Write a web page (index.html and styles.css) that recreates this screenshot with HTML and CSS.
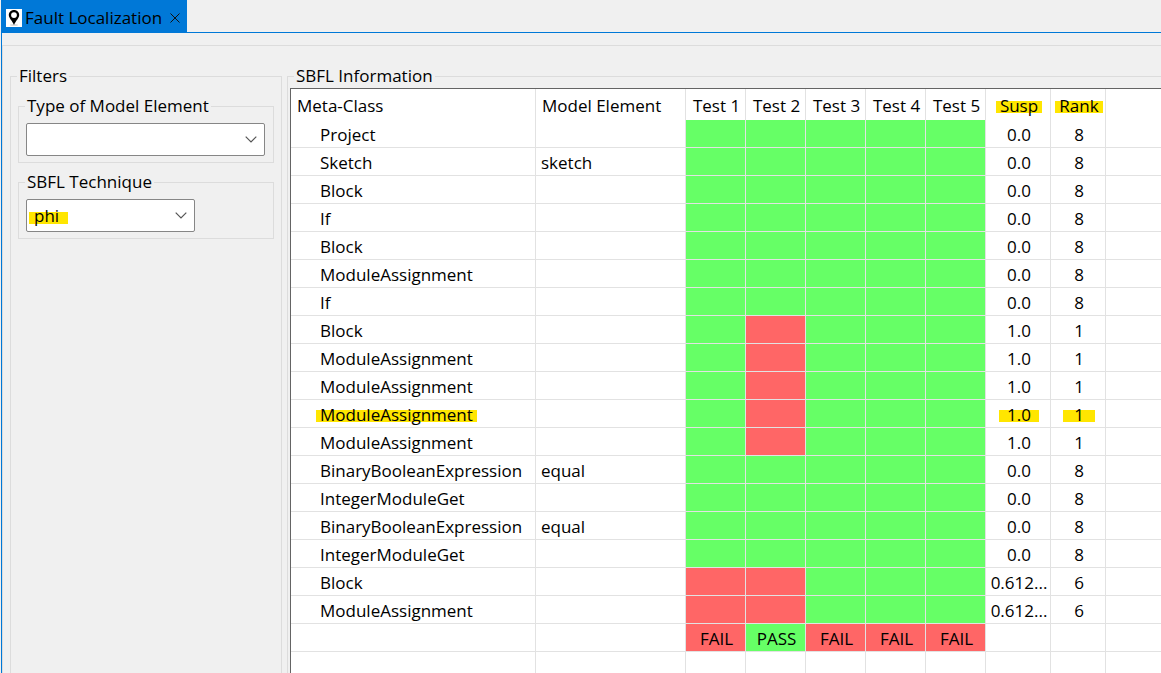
FILE: index.html
```html
<!DOCTYPE html>
<html lang="en">
<head>
<meta charset="utf-8">
<title>Fault Localization</title>
<link rel="stylesheet" href="styles.css">
</head>
<body>
<div class="view">
  <header class="tab-bar">
    <div class="tab">
      <svg class="tab-icon" viewBox="0 0 16 18" aria-hidden="true">
        <rect width="16" height="18" fill="#fff"/>
        <ellipse cx="8" cy="16" rx="4" ry="1" fill="#ddd"/>
        <path fill="#000" fill-rule="evenodd" d="M8 1C5 1 2.800 3.200 2.800 6c0 3 3.600 6 5.200 10 1.600-4 5.200-7 5.200-10C13.200 3.200 11 1 8 1Zm0 2.200a2.900 2.900 0 1 1 0 5.800 2.900 2.900 0 0 1 0-5.800Z"/>
      </svg>
      <span>Fault Localization</span>
      <button class="tab-close" type="button" aria-label="Close">
        <svg viewBox="0 0 10 10" aria-hidden="true"><path d="M.5.5l9 9M9.500.5l-9 9" stroke="#111" fill="none"/></svg>
      </button>
    </div>
  </header>
  <main class="content">
    <fieldset class="group filters">
      <legend>Filters</legend>
      <fieldset class="group filter">
        <legend><label for="element-type">Type of Model Element</label></legend>
        <div class="combo">
          <select id="element-type"><option></option></select>
          <svg class="chevron" viewBox="0 0 12 7" aria-hidden="true"><path d="M.7.700 6 6 11.300.7"/></svg>
        </div>
      </fieldset>
      <fieldset class="group filter">
        <legend><label for="technique">SBFL Technique</label></legend>
        <div class="combo combo-short">
          <select id="technique" class="marked"><option>phi</option></select>
          <svg class="chevron" viewBox="0 0 12 7" aria-hidden="true"><path d="M.7.700 6 6 11.300.7"/></svg>
        </div>
      </fieldset>
    </fieldset>
    <fieldset class="group info">
      <legend>SBFL Information</legend>
      <div class="table-frame">
        <table>
          <colgroup><col class="c-class"><col class="c-element"><col class="c-test" span="5"><col class="c-susp"><col class="c-rank"><col></colgroup>
          <thead>
            <tr><th class="left">Meta-Class</th><th class="left">Model Element</th><th>Test 1</th><th>Test 2</th><th>Test 3</th><th>Test 4</th><th>Test 5</th><th><mark>Susp</mark></th><th><mark>Rank</mark></th><th></th></tr>
          </thead>
          <tbody>
            <tr><td>Project</td><td></td><td class="ok"></td><td class="ok"></td><td class="ok"></td><td class="ok"></td><td class="ok"></td><td>0.0</td><td>8</td><td></td></tr>
            <tr><td>Sketch</td><td>sketch</td><td class="ok"></td><td class="ok"></td><td class="ok"></td><td class="ok"></td><td class="ok"></td><td>0.0</td><td>8</td><td></td></tr>
            <tr><td>Block</td><td></td><td class="ok"></td><td class="ok"></td><td class="ok"></td><td class="ok"></td><td class="ok"></td><td>0.0</td><td>8</td><td></td></tr>
            <tr><td>If</td><td></td><td class="ok"></td><td class="ok"></td><td class="ok"></td><td class="ok"></td><td class="ok"></td><td>0.0</td><td>8</td><td></td></tr>
            <tr><td>Block</td><td></td><td class="ok"></td><td class="ok"></td><td class="ok"></td><td class="ok"></td><td class="ok"></td><td>0.0</td><td>8</td><td></td></tr>
            <tr><td>ModuleAssignment</td><td></td><td class="ok"></td><td class="ok"></td><td class="ok"></td><td class="ok"></td><td class="ok"></td><td>0.0</td><td>8</td><td></td></tr>
            <tr><td>If</td><td></td><td class="ok"></td><td class="ok"></td><td class="ok"></td><td class="ok"></td><td class="ok"></td><td>0.0</td><td>8</td><td></td></tr>
            <tr><td>Block</td><td></td><td class="ok"></td><td class="bad"></td><td class="ok"></td><td class="ok"></td><td class="ok"></td><td>1.0</td><td>1</td><td></td></tr>
            <tr><td>ModuleAssignment</td><td></td><td class="ok"></td><td class="bad"></td><td class="ok"></td><td class="ok"></td><td class="ok"></td><td>1.0</td><td>1</td><td></td></tr>
            <tr><td>ModuleAssignment</td><td></td><td class="ok"></td><td class="bad"></td><td class="ok"></td><td class="ok"></td><td class="ok"></td><td>1.0</td><td>1</td><td></td></tr>
            <tr><td><mark>ModuleAssignment</mark></td><td></td><td class="ok"></td><td class="bad"></td><td class="ok"></td><td class="ok"></td><td class="ok"></td><td><mark class="wide">1.0</mark></td><td><mark class="wider">1</mark></td><td></td></tr>
            <tr><td>ModuleAssignment</td><td></td><td class="ok"></td><td class="bad"></td><td class="ok"></td><td class="ok"></td><td class="ok"></td><td>1.0</td><td>1</td><td></td></tr>
            <tr><td>BinaryBooleanExpression</td><td>equal</td><td class="ok"></td><td class="ok"></td><td class="ok"></td><td class="ok"></td><td class="ok"></td><td>0.0</td><td>8</td><td></td></tr>
            <tr><td>IntegerModuleGet</td><td></td><td class="ok"></td><td class="ok"></td><td class="ok"></td><td class="ok"></td><td class="ok"></td><td>0.0</td><td>8</td><td></td></tr>
            <tr><td>BinaryBooleanExpression</td><td>equal</td><td class="ok"></td><td class="ok"></td><td class="ok"></td><td class="ok"></td><td class="ok"></td><td>0.0</td><td>8</td><td></td></tr>
            <tr><td>IntegerModuleGet</td><td></td><td class="ok"></td><td class="ok"></td><td class="ok"></td><td class="ok"></td><td class="ok"></td><td>0.0</td><td>8</td><td></td></tr>
            <tr><td>Block</td><td></td><td class="bad"></td><td class="bad"></td><td class="ok"></td><td class="ok"></td><td class="ok"></td><td>0.612...</td><td>6</td><td></td></tr>
            <tr><td>ModuleAssignment</td><td></td><td class="bad"></td><td class="bad"></td><td class="ok"></td><td class="ok"></td><td class="ok"></td><td>0.612...</td><td>6</td><td></td></tr>
            <tr><td></td><td></td><td class="bad">FAIL</td><td class="ok">PASS</td><td class="bad">FAIL</td><td class="bad">FAIL</td><td class="bad">FAIL</td><td></td><td></td><td></td></tr>
            <tr><td></td><td></td><td></td><td></td><td></td><td></td><td></td><td></td><td></td><td></td></tr>
          </tbody>
        </table>
      </div>
    </fieldset>
  </main>
</div>
</body>
</html>
```
FILE: styles.css
```css
* {
  box-sizing: border-box;
}

body {
  margin: 0;
  height: 100vh;
  overflow: hidden;
  background: #f0f0f0;
  color: #000;
  font: 17px/22px "Open Sans", "Noto Sans", sans-serif;
}

.view {
  height: 100%;
  display: flex;
  flex-direction: column;
  margin-left: 1px;
  border-left: 1px solid #0078d7;
}

.tab-bar {
  display: flex;
  border-bottom: 1px solid #0078d7;
}

.tab {
  display: flex;
  align-items: center;
  height: 32px;
  padding: 3px 7px 0 4px;
  background: #0078d7;
  white-space: nowrap;
}

.tab-icon {
  width: 16px;
  height: 18px;
  margin-right: 3px;
}

.tab-close {
  display: flex;
  margin-left: 8px;
  padding: 0;
  border: 0;
  background: none;
}

.tab-close svg {
  width: 10px;
  height: 10px;
}

.content {
  flex: 1;
  min-height: 0;
  display: flex;
  gap: 5px;
  margin-top: 12px;
  padding: 19px 0 0 7px;
  border-top: 1px solid #dcdcdc;
  border-left: 1px solid #dcdcdc;
}

.group {
  min-width: 0;
  margin: 0;
  border: 1px solid #dcdcdc;
}

legend {
  padding: 0 2px;
  white-space: nowrap;
}

.filters {
  flex: 0 0 272px;
  padding: 8px 7px 0;
  border-bottom: 0;
}

.filters > legend,
.filter > legend {
  margin-left: -1px;
}

.filter {
  padding: 6px 8px 6px 7px;
}

.filter + .filter {
  margin-top: 8px;
}

.combo {
  position: relative;
}

.combo-short {
  width: 169px;
}

.combo select {
  display: block;
  width: 100%;
  height: 33px;
  padding: 0 7px;
  appearance: none;
  border: 1px solid #868686;
  border-radius: 2px;
  background-color: #fff;
  color: #000;
  font: inherit;
}

.combo .marked {
  background-image: linear-gradient(#ffe600, #ffe600);
  background-repeat: no-repeat;
  background-position: 2px 12px;
  background-size: 39px 12px;
}

.chevron {
  position: absolute;
  right: 8px;
  top: 13px;
  width: 12px;
  height: 7px;
  pointer-events: none;
}

.chevron path {
  fill: none;
  stroke: #555;
  stroke-width: 1.2;
}

.info {
  flex: 1;
  padding: 1px 0 0 2px;
  border-right: 0;
  border-bottom: 0;
}

.info > legend {
  margin-left: 4px;
}

.table-frame {
  border-top: 1px solid #646464;
  border-left: 1px solid #646464;
  background: #fff;
}

table {
  width: 100%;
  table-layout: fixed;
  border-collapse: separate;
  border-spacing: 0;
}

.c-class { width: 245px; }
.c-element { width: 150px; }
.c-test { width: 60px; }
.c-susp { width: 65px; }
.c-rank { width: 55px; }

th,
td {
  padding: 2px 0 0 2px;
  border-right: 1px solid #e2e2e2;
  font-weight: 400;
  text-align: center;
  white-space: nowrap;
}

th {
  height: 31px;
}

th.left {
  padding-left: 6px;
  text-align: left;
}

td {
  height: 28px;
  border-bottom: 1px solid #e2e2e2;
}

td:first-child {
  padding-left: 29px;
  text-align: left;
}

td:nth-child(2) {
  padding-left: 5px;
  text-align: left;
}

th:last-child,
td:last-child {
  border-right: 0;
}

.ok { background: #66ff66; }
.bad { background: #ff6666; }

mark {
  margin: 0 -4px;
  padding: 0 4px;
  background: linear-gradient(#ffe600, #ffe600) no-repeat 0 7px / 100% 12px;
  color: inherit;
}

mark.wide {
  margin: 0 -8px;
  padding: 0 8px;
}

mark.wider {
  margin: 0 -11px;
  padding: 0 11px;
}
```
